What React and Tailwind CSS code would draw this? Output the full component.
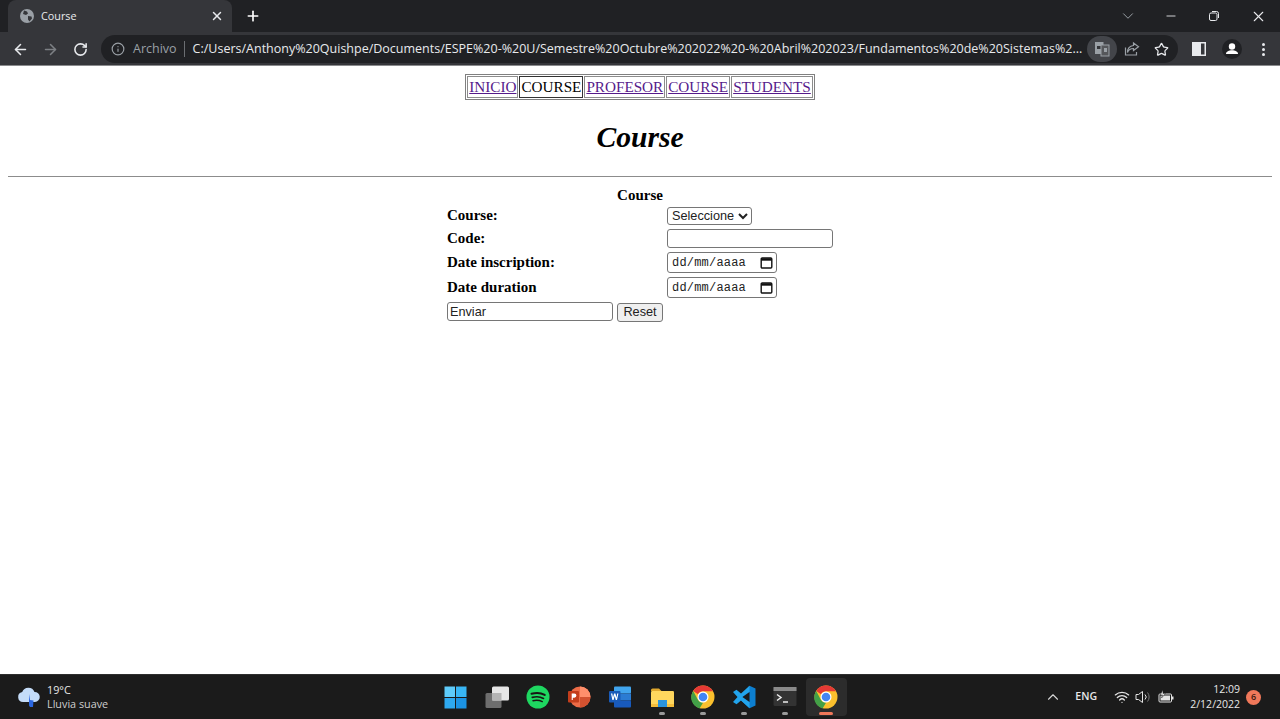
// App.jsx
import { ArrowLeft, ArrowRight, RotateCw, Info, Star, X, Plus, Minus, ChevronDown, ChevronUp, Wifi } from 'lucide-react';

const ui = { fontFamily: '"Open Sans", "Noto Sans", sans-serif' };

function Globe() {
  return (
    <svg width="16" height="16" viewBox="0 0 16 16">
      <circle cx="8" cy="8" r="7" fill="#9aa0a6" />
      <path d="M5 2.500l3 1 1 2-2 1.500-3-1zM9 8l3.500.5.5 2-2.500 3-1.500-2z" fill="#35363a" />
    </svg>
  );
}

function Restore() {
  return (
    <svg width="12" height="12" viewBox="0 0 12 12" fill="none" stroke="#e8eaed" strokeWidth="1">
      <rect x="1.500" y="3" width="7.500" height="7.500" rx="1.500" />
      <path d="M4 1.500h4.500a2 2 0 0 1 2 2V8" />
    </svg>
  );
}

function Translate() {
  return (
    <svg width="16" height="16" viewBox="0 0 16 16">
      <rect x="1" y="1" width="8.500" height="12" fill="#9aa0a6" />
      <rect x="7" y="4" width="8" height="11" fill="#55575b" stroke="#9aa0a6" strokeWidth="1" />
      <rect x="3" y="5" width="3.500" height="3" fill="#35363a" />
      <rect x="10" y="7" width="3" height="4" fill="#9aa0a6" />
    </svg>
  );
}

function Share() {
  return (
    <svg width="16" height="16" viewBox="0 0 16 16" fill="none" stroke="#9aa0a6" strokeWidth="1.200">
      <path d="M1.500 6.500v7.500h11v-3" />
      <path d="M9.500 2l5 3.800-5 3.700V7.500c-3 0-5 1.200-6 4 0-4 2-6.500 6-7z" />
    </svg>
  );
}

function SidePanel() {
  return (
    <svg width="14" height="14" viewBox="0 0 14 14">
      <rect x="0.750" y="0.750" width="12.500" height="12.500" fill="none" stroke="#e8eaed" strokeWidth="1.500" />
      <rect x="1" y="1" width="8" height="12" fill="#e8eaed" />
    </svg>
  );
}

function Avatar() {
  return (
    <svg width="20" height="20" viewBox="0 0 20 20">
      <circle cx="10" cy="10" r="10" fill="#202124" />
      <circle cx="10" cy="7.500" r="3.200" fill="#fff" />
      <path d="M4 15c0-2.500 3-3.700 6-3.700s6 1.200 6 3.700z" fill="#fff" />
    </svg>
  );
}

function CalendarGlyph() {
  return (
    <svg width="13" height="13" viewBox="0 0 13 13" fill="none" stroke="#111" strokeWidth="1.400">
      <rect x="1.200" y="2" width="10.600" height="10" rx="1" />
      <path d="M1.200 3.500h10.600" strokeWidth="2.400" />
    </svg>
  );
}

function WeatherIcon() {
  return (
    <svg width="24" height="22" viewBox="0 0 24 22">
      <path d="M6 16a5 5 0 0 1-.8-9.900A6.500 6.500 0 0 1 17.500 6 5 5 0 0 1 18 16z" fill="#c4dcf8" />
      <path d="M12 8l1 6 3.500.5-.5 6.500h-3A3.500 3.500 0 0 1 12 18z" fill="#2a66e0" />
    </svg>
  );
}

function WinLogo() {
  return (
    <svg width="23" height="23" viewBox="0 0 23 23">
      <rect x="0.500" y="0.500" width="10.500" height="10.500" fill="#5ecbfa" />
      <rect x="12" y="0.500" width="10.500" height="10.500" fill="#38b6f5" />
      <rect x="0.500" y="12" width="10.500" height="10.500" fill="#2ea9f0" />
      <rect x="12" y="12" width="10.500" height="10.500" fill="#1b93e4" />
    </svg>
  );
}

function TaskView() {
  return (
    <svg width="24" height="22" viewBox="0 0 24 22">
      <rect x="0.500" y="7" width="16" height="15" rx="1.500" fill="#6e6e6e" />
      <rect x="7" y="0.500" width="17" height="14" rx="1.500" fill="#e6e6e6" />
      <rect x="7" y="7" width="9.500" height="7.500" fill="#b4b4b4" />
    </svg>
  );
}

function Spotify() {
  return (
    <svg width="24" height="24" viewBox="0 0 24 24" fill="none">
      <circle cx="12" cy="12" r="11.500" fill="#1ed760" />
      <path d="M5.500 8.800c4.500-1.300 9.500-1 13.200 1.100" stroke="#191414" strokeWidth="2" strokeLinecap="round" />
      <path d="M6.300 12.400c3.800-1 8-.7 11.200 1" stroke="#191414" strokeWidth="1.700" strokeLinecap="round" />
      <path d="M7 15.700c3.200-.8 6.500-.5 9.300.9" stroke="#191414" strokeWidth="1.400" strokeLinecap="round" />
    </svg>
  );
}

function PowerPoint() {
  return (
    <svg width="24" height="24" viewBox="0 0 24 24">
      <circle cx="13" cy="12" r="10.500" fill="#ed6c47" />
      <path d="M13 1.500A10.500 10.500 0 0 1 23.500 12H13z" fill="#ff8f6b" />
      <path d="M13 12h10.500A10.500 10.500 0 0 1 13 22.500z" fill="#d35230" />
      <rect x="1" y="6" width="11" height="11.500" rx="1" fill="#c43e1c" />
      <path d="M4.700 15V8.500h2.600a2 2 0 0 1 0 4.200H5.800V15z" fill="#fff" />
    </svg>
  );
}

function Word() {
  return (
    <svg width="24" height="24" viewBox="0 0 24 24">
      <rect x="6" y="1.500" width="17" height="7" rx="1" fill="#41a5ee" />
      <rect x="6" y="8.500" width="17" height="7" fill="#2b7cd3" />
      <rect x="6" y="15.500" width="17" height="7" rx="1" fill="#185abd" />
      <rect x="1" y="6" width="11.500" height="11.500" rx="1" fill="#1a5bb8" />
      <path d="M3 8.500l1.400 6.500h1.200l1.100-4 1.100 4H9l1.400-6.500H9.200l-.7 4-1.100-4H6.100l-1.100 4-.7-4z" fill="#fff" />
    </svg>
  );
}

function Folder() {
  return (
    <svg width="24" height="24" viewBox="0 0 24 24">
      <path d="M1 5a1.500 1.500 0 0 1 1.500-1.500H9L11.500 6H1z" fill="#e0a82e" />
      <rect x="1" y="6" width="23" height="16" rx="1.200" fill="#ffd75e" />
      <rect x="1" y="19" width="23" height="3" fill="#f5bd3a" />
      <rect x="8" y="15" width="9" height="7" fill="#2a93dc" />
    </svg>
  );
}

function Chrome() {
  return (
    <svg width="24" height="24" viewBox="0 0 24 24">
      <circle cx="12" cy="12" r="11.500" fill="#fbc02d" />
      <path d="M12 .5a11.500 11.500 0 0 1 10 5.750H12a5.750 5.750 0 0 0-5 2.900L2.200 5.900A11.500 11.500 0 0 1 12 .5z" fill="#e53935" />
      <path d="M2.200 5.900L7 14.900a5.750 5.750 0 0 0 5 2.850l-3.500 5.700A11.500 11.500 0 0 1 2.200 5.900z" fill="#43a047" />
      <circle cx="12" cy="12" r="5.500" fill="#fff" />
      <circle cx="12" cy="12" r="4.300" fill="#4285f4" />
    </svg>
  );
}

function VSCode() {
  return (
    <svg width="24" height="24" viewBox="0 0 24 24">
      <path d="M17.500 0.800L23.500 3.500v17l-6 2.800-11-10.300z" fill="#0d7fd0" />
      <path d="M17.500 0.800V7L10.500 12l7 5v6.300L9 15.500l-4.500 3.700L1 17l4.500-5L1 7l3.500-2.200L9 8.500z" fill="#22a4ec" />
      <path d="M17.500 7v10l-7-5z" fill="#1b1b1b" />
    </svg>
  );
}

function Terminal() {
  return (
    <svg width="24" height="22" viewBox="0 0 24 22" fill="none">
      <rect x="0.500" y="1" width="23" height="19" rx="1.500" fill="#333" />
      <rect x="0.500" y="1" width="23" height="4" fill="#8a8a8a" />
      <path d="M4 8.500l4 3-4 3" stroke="#eee" strokeWidth="1.500" />
      <path d="M10 16h5" stroke="#eee" strokeWidth="1.500" />
    </svg>
  );
}

function Volume() {
  return (
    <svg width="17" height="14" viewBox="0 0 17 14" fill="none" stroke="#e5e5e5" strokeWidth="1">
      <path d="M1 4.500h2.500L7.500 1.500v11l-4-3H1z" />
      <path d="M10 4.500a3.500 3.500 0 0 1 0 5" />
      <path d="M12.500 2.500a7 7 0 0 1 0 9" stroke="#777" />
    </svg>
  );
}

function Battery() {
  return (
    <svg width="16" height="14" viewBox="0 0 16 14">
      <rect x="1" y="4" width="12.500" height="8" rx="1" fill="none" stroke="#e5e5e5" />
      <rect x="2.500" y="5.500" width="9.500" height="5" fill="#e5e5e5" />
      <rect x="14" y="6.500" width="1.500" height="3" fill="#e5e5e5" />
      <path d="M5 0L2 5h2.500L3.500 8 7.500 3.500H5z" fill="#e5e5e5" stroke="#1b1b1b" strokeWidth="0.500" />
    </svg>
  );
}

const taskbarApps = [
  { icon: <WinLogo /> },
  { icon: <TaskView /> },
  { icon: <Spotify /> },
  { icon: <PowerPoint /> },
  { icon: <Word /> },
  { icon: <Folder />, open: true },
  { icon: <Chrome />, open: true },
  { icon: <VSCode />, open: true },
  { icon: <Terminal />, open: true },
  { icon: <Chrome />, active: true },
];

const navItems = [
  { label: 'INICIO', href: '#inicio' },
  { label: 'COURSE' },
  { label: 'PROFESOR', href: '#profesor' },
  { label: 'COURSE', href: '#course' },
  { label: 'STUDENTS', href: '#students' },
];

function DateField() {
  return (
    <div className="flex w-[110px] h-[21px] items-center justify-between border border-[#767676] rounded-[3px] bg-white pl-[4px] pr-[3px] font-normal">
      <span className="text-[12px] tracking-[0.2px] text-[#222]" style={{ fontFamily: '"Liberation Mono", monospace' }}>dd/mm/aaaa</span>
      <CalendarGlyph />
    </div>
  );
}

function BrowserChrome() {
  return (
    <div style={ui} className="shrink-0">
      {/* pestañas */}
      <div className="flex h-[32px] bg-[#202124] pl-[8px] items-end">
        <div className="flex items-center w-[224px] h-[32px] bg-[#35363a] rounded-t-[8px] pl-[11px] pr-[8px] gap-[6px]">
          <Globe />
          <span className="flex-1 text-[10.800px] text-[#e8eaed]">Course</span>
          <X size={14} color="#e8eaed" strokeWidth={2.500} />
        </div>
        <div className="flex items-center h-[32px] ml-[13px]">
          <Plus size={16} color="#fff" strokeWidth={2.500} />
        </div>
        <div className="flex items-center h-[32px] ml-auto">
          <ChevronDown size={18} color="#9aa0a6" strokeWidth={1.300} className="mr-[27px]" />
          <Minus size={14} color="#e8eaed" strokeWidth={1.500} className="mr-[30px]" />
          <Restore />
          <X size={17} color="#e8eaed" strokeWidth={1.500} className="ml-[30px] mr-[13px]" />
        </div>
      </div>
      {/* barra de direcciones */}
      <div className="flex items-center h-[34px] pt-[1px] bg-[#35363a] border-b border-[#8a8b8d] pl-[12px]">
        <ArrowLeft size={17} color="#e8eaed" strokeWidth={2.200} className="shrink-0" />
        <ArrowRight size={17} color="#7d8084" strokeWidth={2.200} className="shrink-0 ml-[13px]" />
        <RotateCw size={15} color="#e8eaed" strokeWidth={2.500} className="shrink-0 ml-[14px]" />
        <div className="flex items-center shrink-0 w-[1077px] h-[28px] rounded-full bg-[#202124] ml-[13px] pl-[10px]">
          <Info size={14} color="#9aa0a6" className="shrink-0" />
          <span className="ml-[8px] text-[12.500px] text-[#9aa0a6]">Archivo</span>
          <span className="w-px h-[16px] bg-[#6b6e72] ml-[7px]" />
          <span className="ml-[8px] w-[889px] shrink-0 text-[12.500px] text-[#e8eaed] whitespace-nowrap">
            C:/Users/Anthony%20Quishpe/Documents/ESPE%20-%20U/Semestre%20Octubre%202022%20-%20Abril%202023/Fundamentos%20de%20Sistemas%2...
          </span>
          <span className="flex items-center justify-center shrink-0 w-[30px] h-[26px] rounded-full bg-[#43454a] ml-[5px]">
            <Translate />
          </span>
          <span className="shrink-0 ml-[7px]"><Share /></span>
          <Star size={15} color="#e8eaed" strokeWidth={2} className="shrink-0 ml-[14px]" />
        </div>
        <span className="ml-[14px]"><SidePanel /></span>
        <span className="ml-[16px]"><Avatar /></span>
        <div className="flex flex-col gap-[2px] ml-[20px]">
          <span className="w-[3px] h-[3px] rounded-full bg-[#e8eaed]" />
          <span className="w-[3px] h-[3px] rounded-full bg-[#e8eaed]" />
          <span className="w-[3px] h-[3px] rounded-full bg-[#e8eaed]" />
        </div>
      </div>
    </div>
  );
}

function Page() {
  return (
    <main className="flex-1 bg-white px-[8px] pt-[8px] text-black" style={{ fontFamily: '"Liberation Serif", serif' }}>
      <table className="mx-auto border border-[#808080] border-separate border-spacing-[1px] text-[15.200px]">
        <tbody>
          <tr>
            {navItems.map((item, i) => (
              <td key={i} className={`border p-[1px] leading-[18px] ${item.href ? 'border-[#8c8c8c]' : 'border-[#333]'}`}>
                {item.href ? <a href={item.href} className="text-[#551a8b] underline">{item.label}</a> : item.label}
              </td>
            ))}
          </tr>
        </tbody>
      </table>

      <h1 className="text-center text-[29.600px] font-bold italic leading-[37px] mt-[19px]">Course</h1>
      <hr className="border-t border-[#8c8c8c] mt-[20px] border-b-0 h-px" />

      <table className="mx-auto mt-[6px] border-separate border-spacing-[2px] text-[15px] leading-[18px]">
        <tbody className="font-bold">
          <tr>
            <th colSpan={2} className="pt-[2px] px-[1px] pb-0 text-center leading-[17px]">Course</th>
          </tr>
          <tr>
            <td className="px-[1px] pt-0 pb-[2px] w-[216px]">Course:</td>
            <td className="p-[1px] leading-[0]">
              <select className="h-[18px] w-[85px] border border-[#767676] rounded-[3px] bg-white text-[12.700px] text-[#222] font-normal leading-[15px]" style={{ fontFamily: '"Liberation Sans", sans-serif' }}>
                <option>Seleccione</option>
              </select>
            </td>
          </tr>
          <tr>
            <td className="px-[1px] pt-0 pb-[2px]">Code:</td>
            <td className="p-[1px] leading-[0]">
              <input type="text" className="w-[166px] h-[19px] border border-[#767676] rounded-[3px] bg-white" />
            </td>
          </tr>
          <tr>
            <td className="px-[1px] pt-0 pb-[2px]">Date inscription:</td>
            <td className="p-[1px]"><DateField /></td>
          </tr>
          <tr>
            <td className="px-[1px] pt-0 pb-[2px]">Date duration</td>
            <td className="p-[1px]"><DateField /></td>
          </tr>
          <tr>
            <td className="p-[1px] leading-[0] whitespace-nowrap font-normal">
              <input
                type="text"
                defaultValue="Enviar"
                className="w-[166px] h-[19px] border border-[#767676] rounded-[3px] bg-white px-[2px] text-[12.700px] text-[#222] leading-[15px]"
                style={{ fontFamily: '"Liberation Sans", sans-serif' }}
              />
              <button
                type="reset"
                className="ml-[4px] w-[46px] h-[19px] border border-[#767676] rounded-[3px] bg-[#efefef] text-[12.700px] text-[#222] leading-[15px]"
                style={{ fontFamily: '"Liberation Sans", sans-serif' }}
              >
                Reset
              </button>
            </td>
            <td />
          </tr>
        </tbody>
      </table>
    </main>
  );
}

function Taskbar() {
  return (
    <footer style={ui} className="flex items-center h-[45px] shrink-0 bg-[#1b1b1b] border-t border-[#2e2e2e] text-[#e8e8e8]">
      <div className="flex items-center w-[435px] pl-[17px] gap-[6px]">
        <WeatherIcon />
        <div className="text-[10.800px] leading-[14px]">
          <div>19°C</div>
          <div className="text-[#cfcfcf]">Lluvia suave</div>
        </div>
      </div>

      <div className="flex items-center">
        {taskbarApps.map((app, i) => (
          <div key={i} className={`relative flex items-center justify-center w-[41.200px] h-[38px] rounded-[4px] ${app.active ? 'bg-[#2c2c2c]' : ''}`}>
            {app.icon}
            {app.open && <span className="absolute bottom-[1px] w-[6px] h-[3px] rounded-full bg-[#9a9a9a]" />}
            {app.active && <span className="absolute bottom-[1px] w-[14px] h-[3px] rounded-full bg-[#f0785a]" />}
          </div>
        ))}
      </div>

      <div className="flex items-center ml-auto pr-[19px]">
        <ChevronUp size={18} color="#d5d5d5" strokeWidth={1.500} />
        <span className="ml-[13px] text-[10.500px] font-semibold">ENG</span>
        <Wifi size={16} color="#e5e5e5" strokeWidth={2} className="ml-[17px]" />
        <span className="ml-[5px]"><Volume /></span>
        <span className="ml-[6px]"><Battery /></span>
        <div className="ml-[6px] text-right text-[10.500px] leading-[15px] w-[60px]">
          <div>12:09</div>
          <div>2/12/2022</div>
        </div>
        <span className="flex items-center justify-center ml-[6px] w-[15px] h-[15px] rounded-full bg-[#f0785a] text-[9px] font-semibold text-[#3a1a10]">6</span>
      </div>
    </footer>
  );
}

export default function App() {
  return (
    <div className="flex flex-col h-[719px] w-[1280px] overflow-hidden">
      <BrowserChrome />
      <Page />
      <Taskbar />
    </div>
  );
}
